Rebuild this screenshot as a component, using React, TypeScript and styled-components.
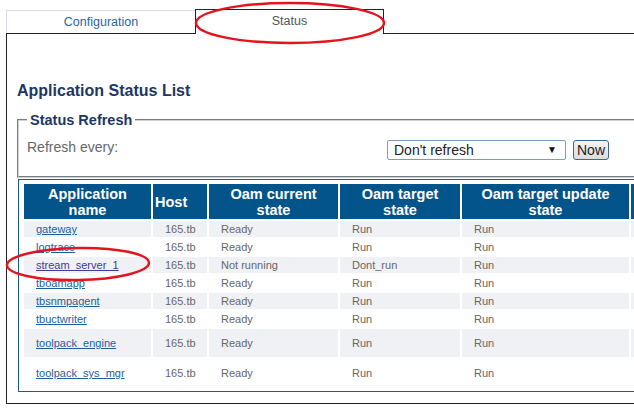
import styled, { createGlobalStyle } from "styled-components";

const GlobalStyle = createGlobalStyle`
  html, body {
    margin: 0;
    padding: 0;
    background: #fff;
    overflow: hidden;
  }
  body {
    width: 634px;
    height: 411px;
    font-family: "Liberation Sans", Arial, sans-serif;
  }
`;

type AppRow = {
  name: string;
  current: string;
  target: string;
  update: string;
  visited?: boolean;
  tall?: boolean;
};

const apps: AppRow[] = [
  { name: "gateway", current: "Ready", target: "Run", update: "Run" },
  { name: "logtrace", current: "Ready", target: "Run", update: "Run" },
  { name: "stream_server_1", current: "Not running", target: "Dont_run", update: "Run", visited: true },
  { name: "tboamapp", current: "Ready", target: "Run", update: "Run" },
  { name: "tbsnmpagent", current: "Ready", target: "Run", update: "Run" },
  { name: "tbuctwriter", current: "Ready", target: "Run", update: "Run" },
  { name: "toolpack_engine", current: "Ready", target: "Run", update: "Run", tall: true },
  { name: "toolpack_sys_mgr", current: "Ready", target: "Run", update: "Run", tall: true },
];

const COLUMNS = "127px 54px 129px 120px 167px 120px";

export default function App() {
  return (
    <Page>
      <GlobalStyle />
      <TabBar>
        <Tab>Configuration</Tab>
        <Tab $active>Status</Tab>
      </TabBar>
      <Panel>
        <Title>Application Status List</Title>
        <Refresh>
          <Legend>Status Refresh</Legend>
          <RefreshRow>
            <Label>Refresh every:</Label>
            <SelectBox>
              <Select defaultValue="none">
                <option value="none">Don't refresh</option>
                <option value="10">10 seconds</option>
                <option value="30">30 seconds</option>
              </Select>
              <Arrow>▼</Arrow>
            </SelectBox>
            <NowButton>Now</NowButton>
          </RefreshRow>
        </Refresh>
        <TableBox>
          <Row>
            <HeadCell>
              Application
              <br />
              name
            </HeadCell>
            <HeadCell $left>Host</HeadCell>
            <HeadCell>
              Oam current
              <br />
              state
            </HeadCell>
            <HeadCell>
              Oam target
              <br />
              state
            </HeadCell>
            <HeadCell>
              Oam target update
              <br />
              state
            </HeadCell>
            <HeadCell />
          </Row>
          {apps.map((a, i) => (
            <Row key={a.name} $tall={a.tall}>
              <Cell $shade={i % 2 === 0}>
                <AppLink href="#" $visited={a.visited}>
                  {a.name}
                </AppLink>
              </Cell>
              <Cell $shade={i % 2 === 0}>165.tb</Cell>
              <Cell $shade={i % 2 === 0}>{a.current}</Cell>
              <Cell $shade={i % 2 === 0}>{a.target}</Cell>
              <Cell $shade={i % 2 === 0}>{a.update}</Cell>
              <Cell $shade={i % 2 === 0} />
            </Row>
          ))}
        </TableBox>
      </Panel>

      {/* hand-drawn red annotation marks lying over the page */}
      <Marks width="634" height="411" viewBox="0 0 634 411">
        <ellipse cx="290" cy="23" rx="94" ry="20" />
        <ellipse cx="78" cy="264" rx="71" ry="16" transform="rotate(-1 78 264)" />
      </Marks>
    </Page>
  );
}

const Page = styled.div`
  position: relative;
  width: 634px;
  height: 411px;
  overflow: hidden;
`;

const TabBar = styled.div`
  display: flex;
  align-items: flex-end;
  padding: 9px 0 0 6px;
  position: relative;
  z-index: 1;
`;

const Tab = styled.div<{ $active?: boolean }>`
  box-sizing: border-box;
  width: 189px;
  display: flex;
  align-items: center;
  justify-content: center;
  font-size: 12.5px;
  background: #fff;
  ${(p) =>
    p.$active
      ? `
    height: 25px;
    margin-bottom: -1px;
    padding-bottom: 3px;
    border: 1px solid #222;
    border-bottom: none;
    color: #555;
  `
      : `
    height: 23px;
    border-top: 1px solid #dcdde6;
    border-left: 1px solid #dcdde6;
    color: #2b66a0;
  `}
`;

const Panel = styled.div`
  margin-left: 6px;
  width: 720px;
  border: 1px solid #222;
  padding: 48px 0 11px 10px;
`;

const Title = styled.h2`
  margin: 0 0 12px;
  font-size: 16px;
  line-height: 18px;
  font-weight: bold;
  color: #1c3764;
`;

const Refresh = styled.fieldset`
  margin: 0;
  width: 640px;
  padding: 10px 8px 16px;
  border: 2px groove #d0d0d0;
`;

const Legend = styled.legend`
  padding: 0 3px;
  font-size: 14.5px;
  line-height: 16px;
  font-weight: bold;
  color: #1c3764;
`;

const RefreshRow = styled.div`
  display: grid;
  grid-template-columns: 353px 179px 36px;
  column-gap: 7px;
  align-items: start;
`;

const Label = styled.span`
  font-size: 14px;
  line-height: 18px;
  color: #666;
`;

const SelectBox = styled.div`
  position: relative;
  margin-top: 2px;
  height: 20px;
`;

const Select = styled.select`
  appearance: none;
  box-sizing: border-box;
  width: 179px;
  height: 20px;
  margin: 0;
  padding: 0 0 0 6px;
  border: 1px solid #7f9db9;
  border-radius: 2px;
  background: #fff;
  font-family: "Liberation Sans", Arial, sans-serif;
  font-size: 14px;
  color: #222;
  outline: none;
`;

const Arrow = styled.span`
  position: absolute;
  right: 9px;
  top: 4px;
  font-size: 10px;
  line-height: 12px;
  color: #111;
  pointer-events: none;
`;

const NowButton = styled.button`
  box-sizing: border-box;
  margin-top: 2px;
  width: 36px;
  height: 20px;
  padding: 0;
  border: 1px solid #3b6791;
  border-radius: 3px;
  background: linear-gradient(#f4f4f4, #dcdcdc);
  font-family: "Liberation Sans", Arial, sans-serif;
  font-size: 14px;
  color: #222;
`;

const TableBox = styled.div`
  margin: 1px 0 0 1px;
  width: 700px;
  border: 1px solid #1a5c8e;
  padding: 4px 0 4px 5px;
  display: flex;
  flex-direction: column;
  gap: 2px;
`;

const Row = styled.div<{ $tall?: boolean }>`
  display: grid;
  grid-template-columns: ${COLUMNS};
  column-gap: 2px;
  min-height: ${(p) => (p.$tall ? "28px" : "16px")};
`;

const HeadCell = styled.div<{ $left?: boolean }>`
  height: 35px;
  display: flex;
  align-items: center;
  justify-content: ${(p) => (p.$left ? "flex-start" : "center")};
  padding: 0 2px;
  text-align: ${(p) => (p.$left ? "left" : "center")};
  background: #03548b;
  color: #fff;
  font-size: 14.5px;
  line-height: 16px;
  font-weight: bold;
`;

const Cell = styled.div<{ $shade?: boolean }>`
  display: flex;
  align-items: center;
  padding-left: 12px;
  background: ${(p) => (p.$shade ? "#f0f1f5" : "#fff")};
  color: #666;
  font-size: 11px;
  white-space: nowrap;
`;

const AppLink = styled.a<{ $visited?: boolean }>`
  color: ${(p) => (p.$visited ? "#3a3e8c" : "#1d5f9c")};
  text-decoration: underline;
`;

const Marks = styled.svg`
  position: absolute;
  left: 0;
  top: 0;
  pointer-events: none;
  z-index: 2;
  ellipse {
    fill: none;
    stroke: #e3141d;
    stroke-width: 2.5;
  }
`;
